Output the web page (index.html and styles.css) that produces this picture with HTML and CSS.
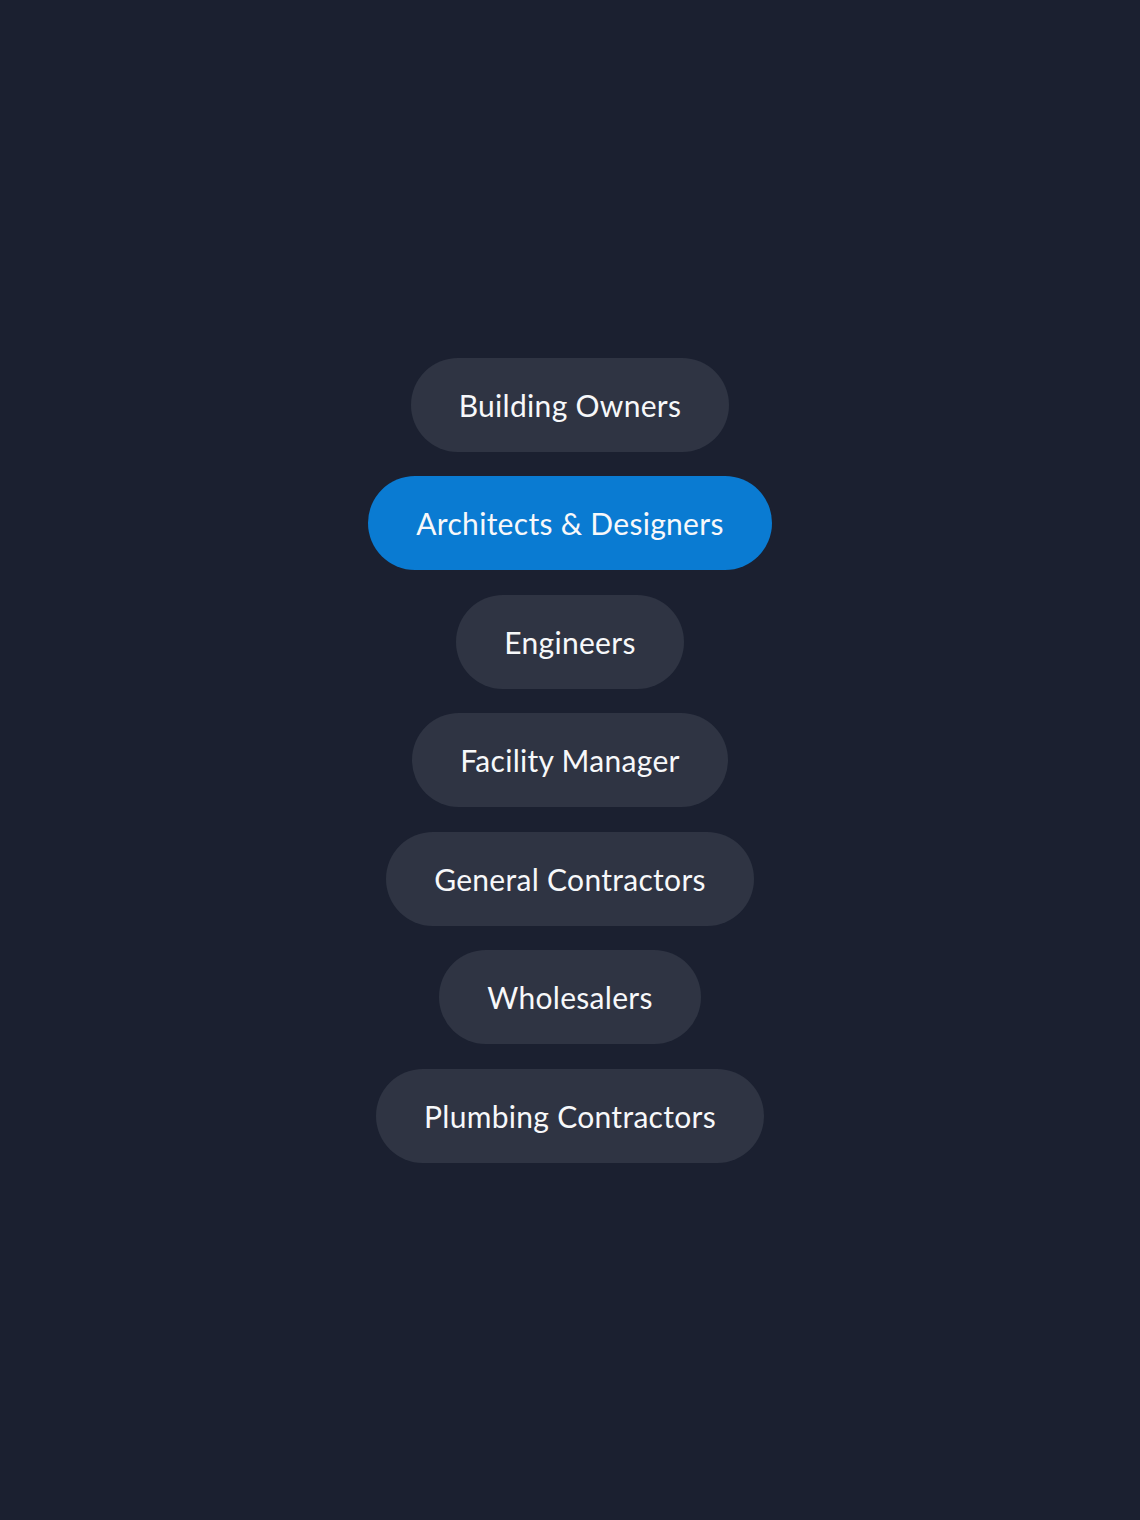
FILE: index.html
```html
<!DOCTYPE html>
<html lang="en">
<head>
    <meta charset="UTF-8">
    <meta name="viewport" content="width=device-width, initial-scale=1.0">
    <title>Audiences</title>
    <link rel="stylesheet" href="styles.css">
</head>
<body>
    <!-- Lista de perfis -->
    <nav class="audiences">
        <button class="pill">Building Owners</button>
        <button class="pill active">Architects &amp; Designers</button>
        <button class="pill">Engineers</button>
        <button class="pill">Facility Manager</button>
        <button class="pill">General Contractors</button>
        <button class="pill">Wholesalers</button>
        <button class="pill">Plumbing Contractors</button>
    </nav>
</body>
</html>
```

FILE: styles.css
```css
body {
    margin: 0;
    font-family: Lato, "Open Sans", sans-serif;
    background-color: #1b2030;
    color: white;
    display: flex;
    align-items: center;
    justify-content: center;
    min-height: 100vh;
}

.audiences {
    display: flex;
    flex-direction: column;
    align-items: center;
    gap: 24.5px;
}

.pill {
    height: 94px;
    padding: 0 48px;
    border: none;
    border-radius: 47px;
    background-color: #2f3443;
    color: #f7f8fa;
    font-family: inherit;
    font-size: 30px;
    letter-spacing: 0.3px;
    cursor: pointer;
}

.pill:hover {
    background-color: #383e4e;
}

/* Item selecionado */
.pill.active {
    background-color: #0a7bd2;
}

.pill.active:hover {
    background-color: #0a7bd2;
}
```
